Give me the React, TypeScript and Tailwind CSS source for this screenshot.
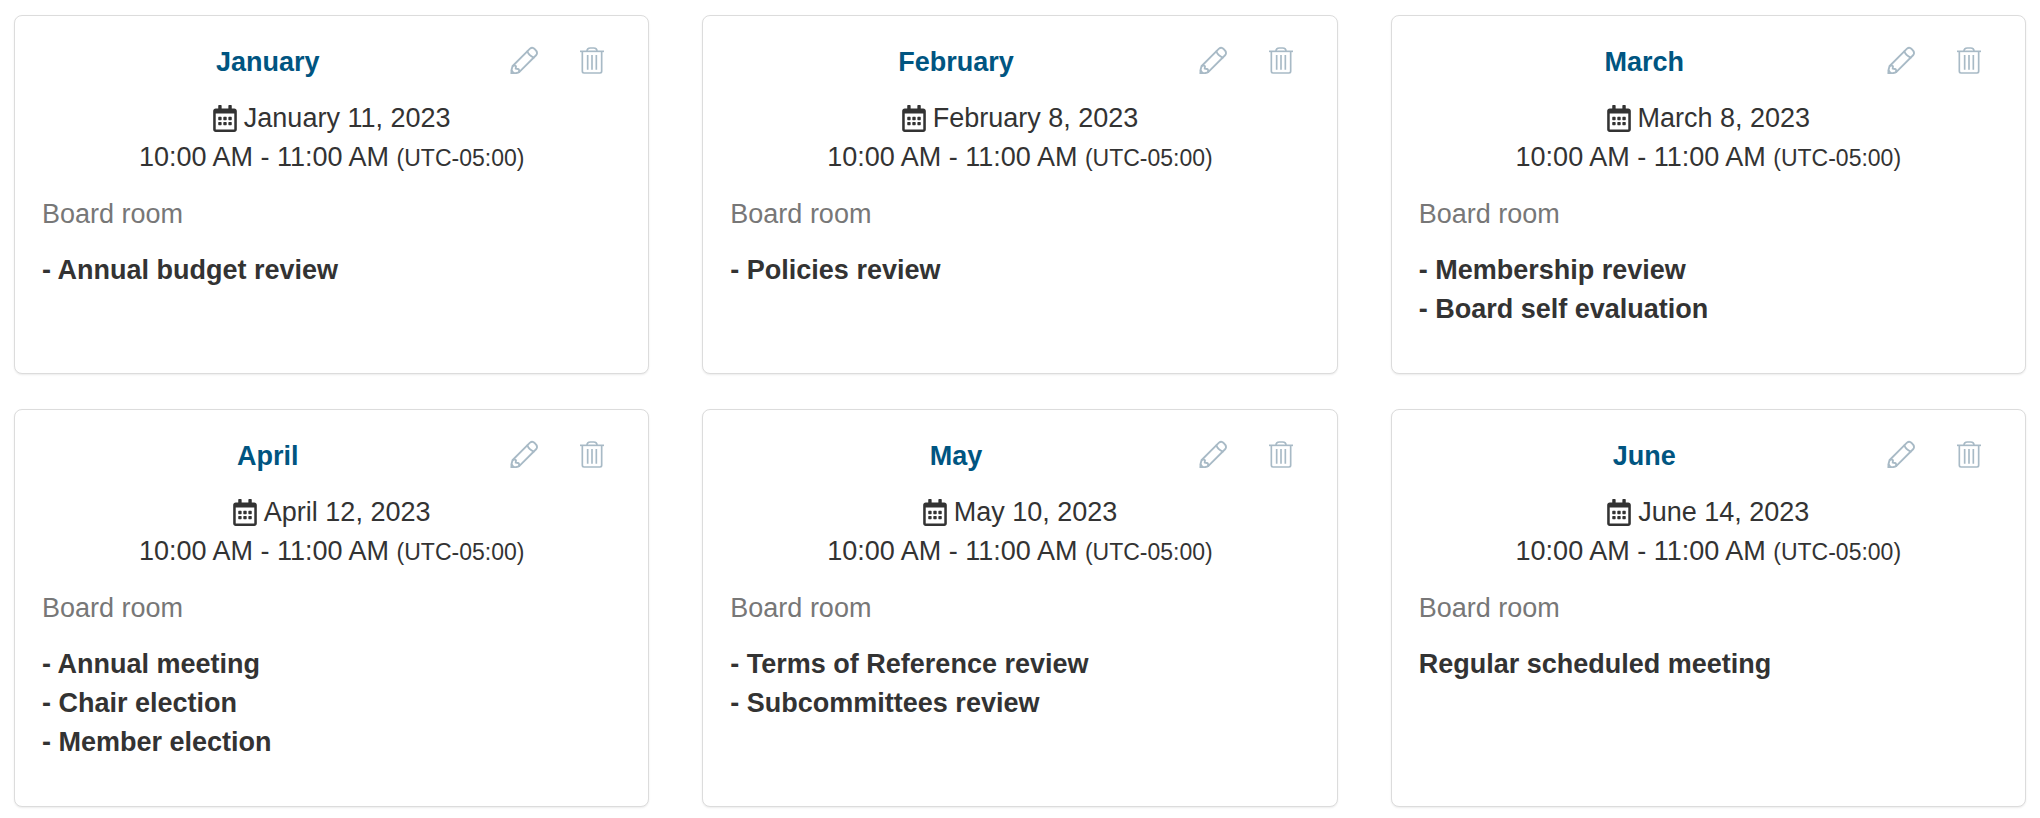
import { FaRegCalendarAlt } from "react-icons/fa";

type Meeting = {
  month: string;
  date: string;
  location: string;
  agenda: string[];
};

const meetings: Meeting[] = [
  {
    month: "January",
    date: "January 11, 2023",
    location: "Board room",
    agenda: ["- Annual budget review"],
  },
  {
    month: "February",
    date: "February 8, 2023",
    location: "Board room",
    agenda: ["- Policies review"],
  },
  {
    month: "March",
    date: "March 8, 2023",
    location: "Board room",
    agenda: ["- Membership review", "- Board self evaluation"],
  },
  {
    month: "April",
    date: "April 12, 2023",
    location: "Board room",
    agenda: ["- Annual meeting", "- Chair election", "- Member election"],
  },
  {
    month: "May",
    date: "May 10, 2023",
    location: "Board room",
    agenda: ["- Terms of Reference review", "- Subcommittees review"],
  },
  {
    month: "June",
    date: "June 14, 2023",
    location: "Board room",
    agenda: ["Regular scheduled meeting"],
  },
];

function PencilIcon() {
  return (
    <svg
      viewBox="0 0 84 84"
      className="h-7 w-7"
      fill="none"
      stroke="currentColor"
      strokeWidth="5.5"
      strokeLinejoin="round"
      strokeLinecap="round">
      <path d="M8 60 L60 8 Q67 2 74 9 Q85 19 79 27 L29 77 Q25 80 19 81 L4 82 Q4 68 8 60 Z" />
      <path d="M52 16 Q56 28 71 35" />
      <path d="M8 60 Q17 57 18 61 L17 68 L24 69 Q29 70 27 78" />
      <path d="M5 74 L11 81" />
    </svg>
  );
}

function TrashIcon() {
  return (
    <svg
      viewBox="0 0 72 84"
      className="h-7 w-6"
      fill="none"
      stroke="currentColor"
      strokeWidth="5"
      strokeLinejoin="round">
      <path d="M0 16 H72" />
      <path d="M21 16 Q21 6 31 6 H41 Q51 6 51 16" />
      <path d="M7 17 V76 Q7 81 12 81 H60 Q65 81 65 76 V17" />
      <path d="M23 27 V71 M36 27 V71 M49 27 V71" />
    </svg>
  );
}

function MeetingCard({ meeting }: { meeting: Meeting }) {
  return (
    <article className="rounded-lg border border-[#dcdcdc] bg-white px-[27px] pt-[27px] pb-11 shadow-[0_1px_2px_rgba(0,0,0,0.08)]">
      <header className="mb-[17px] flex items-start">
        <h2 className="flex-1 text-center font-bold text-[#005581]">
          {meeting.month}
        </h2>
        <div className="flex gap-[42px] px-[17px] pt-[3px] text-[#a8bac6]">
          <button type="button" aria-label={`Edit ${meeting.month}`}>
            <PencilIcon />
          </button>
          <button type="button" aria-label={`Delete ${meeting.month}`}>
            <TrashIcon />
          </button>
        </div>
      </header>

      <div className="mb-[17px] text-center">
        <p className="flex items-center justify-center gap-[7px]">
          <FaRegCalendarAlt className="h-[27px] w-6" />
          {meeting.date}
        </p>
        <p>
          10:00 AM - 11:00 AM{" "}
          <span className="text-[23px]">(UTC-05:00)</span>
        </p>
      </div>

      <p className="mb-[17px] text-[#777777]">{meeting.location}</p>

      <div className="font-bold">
        {meeting.agenda.map((item) => (
          <p key={item}>{item}</p>
        ))}
      </div>
    </article>
  );
}

function App() {
  return (
    <main className="grid grid-cols-3 gap-x-[53px] gap-y-[35px] bg-white px-3.5 py-[15px] font-['Liberation_Sans',Arial,sans-serif] text-[27px] leading-[39px] text-[#333333]">
      {meetings.map((meeting) => (
        <MeetingCard key={meeting.month} meeting={meeting} />
      ))}
    </main>
  );
}

export default App;
